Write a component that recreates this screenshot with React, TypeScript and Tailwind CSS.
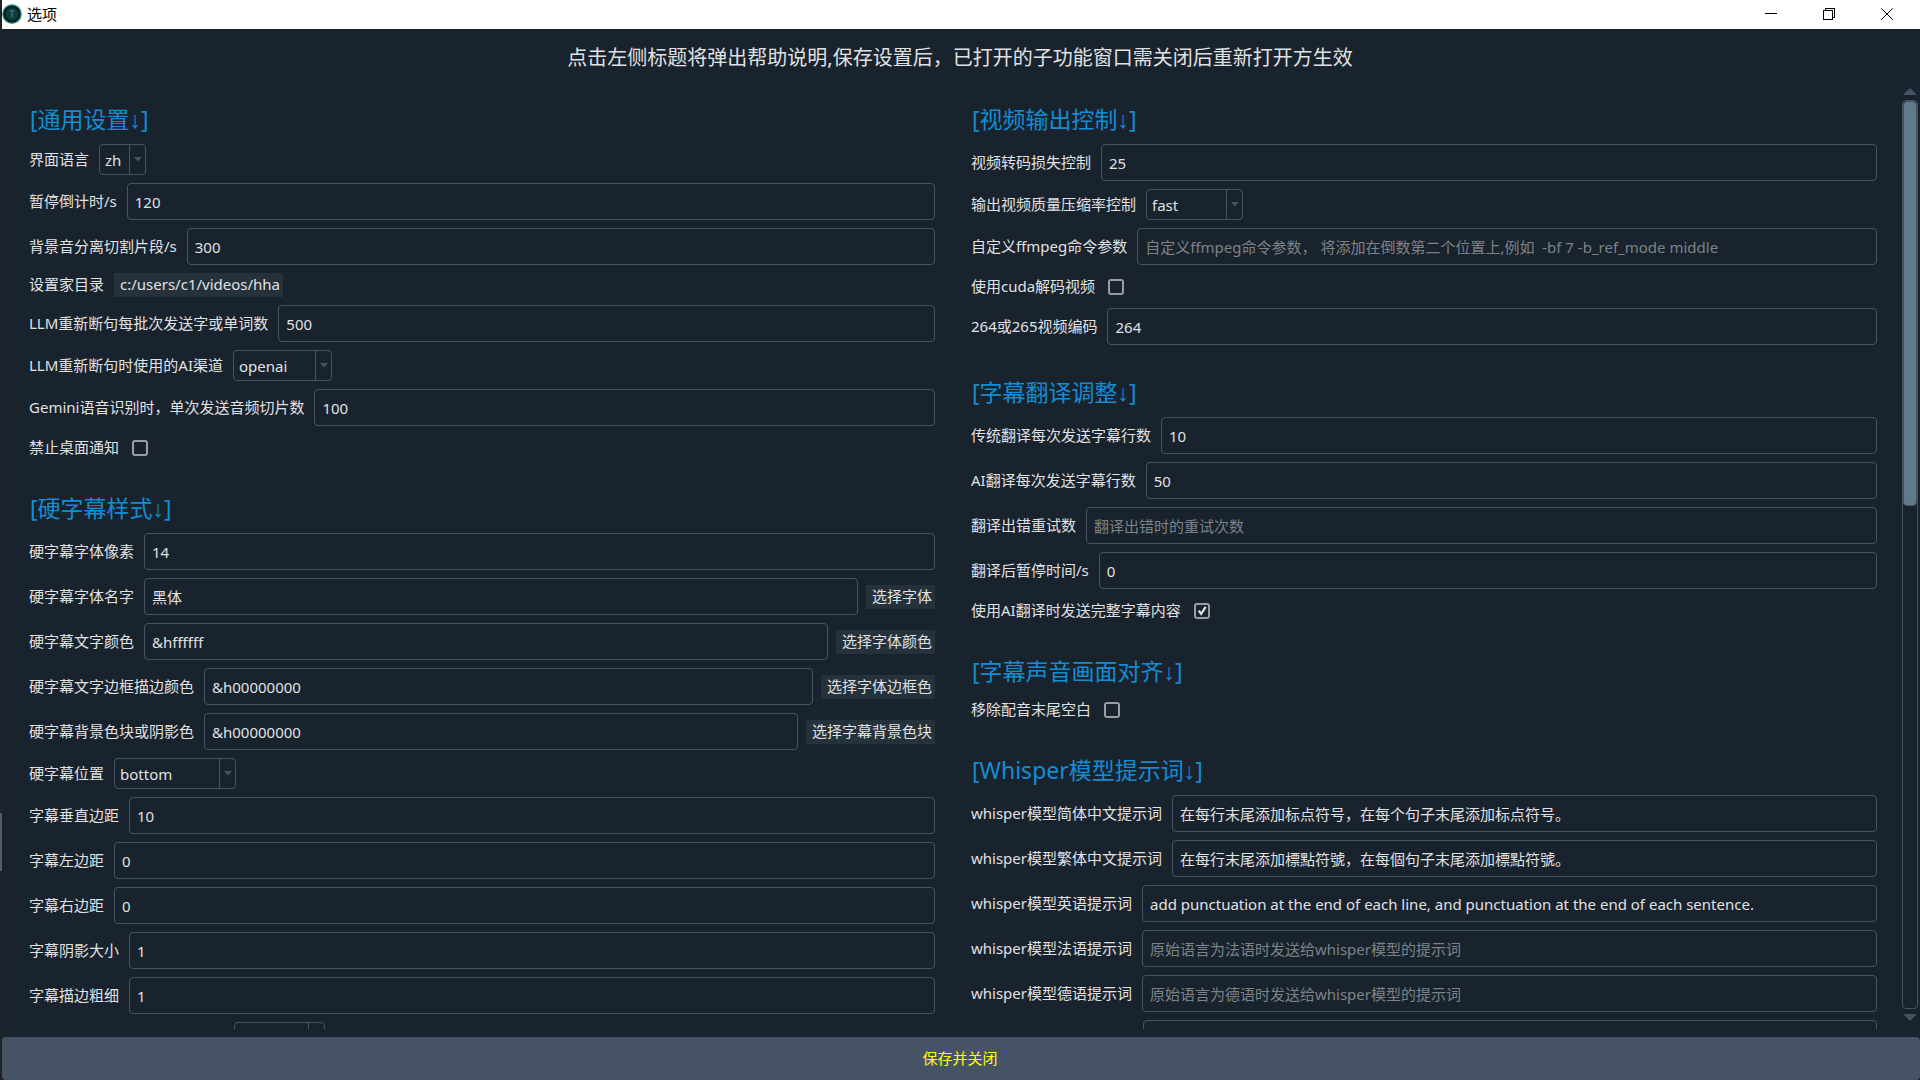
import React, { useId, useState } from 'react';

type Row =
  | { kind: 'input'; label: string; value?: string; placeholder?: string; action?: string }
  | { kind: 'select'; label: string; value: string; width: string }
  | { kind: 'check'; label: string; checked?: boolean }
  | { kind: 'path'; label: string; value: string };

interface Section {
  title: string;
  rows: Row[];
}

const LEFT: Section[] = [
  {
    title: '通用设置',
    rows: [
      { kind: 'select', label: '界面语言', value: 'zh', width: 'w-[47px]' },
      { kind: 'input', label: '暂停倒计时/s', value: '120' },
      { kind: 'input', label: '背景音分离切割片段/s', value: '300' },
      { kind: 'path', label: '设置家目录', value: 'c:/users/c1/videos/hha' },
      { kind: 'input', label: 'LLM重新断句每批次发送字或单词数', value: '500' },
      { kind: 'select', label: 'LLM重新断句时使用的AI渠道', value: 'openai', width: 'w-[99px]' },
      { kind: 'input', label: 'Gemini语音识别时，单次发送音频切片数', value: '100' },
      { kind: 'check', label: '禁止桌面通知' },
    ],
  },
  {
    title: '硬字幕样式',
    rows: [
      { kind: 'input', label: '硬字幕字体像素', value: '14' },
      { kind: 'input', label: '硬字幕字体名字', value: '黑体', action: '选择字体' },
      { kind: 'input', label: '硬字幕文字颜色', value: '&hffffff', action: '选择字体颜色' },
      { kind: 'input', label: '硬字幕文字边框描边颜色', value: '&h00000000', action: '选择字体边框色' },
      { kind: 'input', label: '硬字幕背景色块或阴影色', value: '&h00000000', action: '选择字幕背景色块' },
      { kind: 'select', label: '硬字幕位置', value: 'bottom', width: 'w-[122px]' },
      { kind: 'input', label: '字幕垂直边距', value: '10' },
      { kind: 'input', label: '字幕左边距', value: '0' },
      { kind: 'input', label: '字幕右边距', value: '0' },
      { kind: 'input', label: '字幕阴影大小', value: '1' },
      { kind: 'input', label: '字幕描边粗细', value: '1' },
    ],
  },
];

const RIGHT: Section[] = [
  {
    title: '视频输出控制',
    rows: [
      { kind: 'input', label: '视频转码损失控制', value: '25' },
      { kind: 'select', label: '输出视频质量压缩率控制', value: 'fast', width: 'w-[97px]' },
      {
        kind: 'input',
        label: '自定义ffmpeg命令参数',
        placeholder: '自定义ffmpeg命令参数， 将添加在倒数第二个位置上,例如  -bf 7 -b_ref_mode middle',
      },
      { kind: 'check', label: '使用cuda解码视频' },
      { kind: 'input', label: '264或265视频编码', value: '264' },
    ],
  },
  {
    title: '字幕翻译调整',
    rows: [
      { kind: 'input', label: '传统翻译每次发送字幕行数', value: '10' },
      { kind: 'input', label: 'AI翻译每次发送字幕行数', value: '50' },
      { kind: 'input', label: '翻译出错重试数', placeholder: '翻译出错时的重试次数' },
      { kind: 'input', label: '翻译后暂停时间/s', value: '0' },
      { kind: 'check', label: '使用AI翻译时发送完整字幕内容', checked: true },
    ],
  },
  {
    title: '字幕声音画面对齐',
    rows: [{ kind: 'check', label: '移除配音末尾空白' }],
  },
  {
    title: 'Whisper模型提示词',
    rows: [
      { kind: 'input', label: 'whisper模型简体中文提示词', value: '在每行末尾添加标点符号，在每个句子末尾添加标点符号。' },
      { kind: 'input', label: 'whisper模型繁体中文提示词', value: '在每行末尾添加標點符號，在每個句子末尾添加標點符號。' },
      {
        kind: 'input',
        label: 'whisper模型英语提示词',
        value: 'add punctuation at the end of each line, and punctuation at the end of each sentence.',
      },
      { kind: 'input', label: 'whisper模型法语提示词', placeholder: '原始语言为法语时发送给whisper模型的提示词' },
      { kind: 'input', label: 'whisper模型德语提示词', placeholder: '原始语言为德语时发送给whisper模型的提示词' },
    ],
  },
];

const FIELD = 'h-[37px] min-w-0 flex-1 rounded border border-[#455364] bg-transparent px-[7px] outline-none placeholder:text-[#7d8288] placeholder:opacity-100 focus:border-[#346792]';
const FLAT_BUTTON = 'flex h-6 shrink-0 items-center bg-[#26323b] pb-0.5 pl-1.5 pr-[3px] hover:bg-[#37414f]';

const Combo: React.FC<{ id?: string; value: string; width: string; name?: string }> = ({ id, value, width, name }) => (
  <div className={`relative h-[31px] shrink-0 ${width}`}>
    <select
      id={id}
      aria-label={name}
      defaultValue={value}
      className="block h-full w-full appearance-none rounded border border-[#455364] bg-[#19232d] pl-[5px] outline-none"
    >
      <option value={value}>{value}</option>
    </select>
    {/* drop-down part */}
    <span className="pointer-events-none absolute inset-y-0 right-0 flex w-[17px] items-center justify-center border-l border-[#455364]">
      <svg width="8" height="5" viewBox="0 0 8 5">
        <path d="M0 0h8L4 4.5z" fill="#455364" />
      </svg>
    </span>
  </div>
);

const CheckBox: React.FC<{ id: string; initial: boolean }> = ({ id, initial }) => {
  const [on, setOn] = useState(initial);
  return (
    <span className="relative ml-[3px] size-4">
      <input
        id={id}
        type="checkbox"
        checked={on}
        onChange={(e) => setOn(e.target.checked)}
        className="block size-4 appearance-none rounded-[3px] border-2 border-[#9a9ea3]"
      />
      {on && (
        <svg className="pointer-events-none absolute inset-0" width="16" height="16" viewBox="0 0 16 16">
          <path d="M4.6 7.6l2.5 3.2 4.6-7" fill="none" stroke="#e0e1e3" strokeWidth="2.2" />
        </svg>
      )}
    </span>
  );
};

const FormRow: React.FC<{ row: Row }> = ({ row }) => {
  const id = useId();
  return (
    <div className={`flex items-center ${row.kind === 'check' ? 'h-[27px]' : ''}`}>
      <label htmlFor={id} className="mr-2.5 shrink-0 cursor-pointer whitespace-nowrap pb-0.5">
        {row.label}
      </label>
      {row.kind === 'input' && (
        <>
          <input id={id} type="text" defaultValue={row.value} placeholder={row.placeholder} className={FIELD} />
          {row.action && <button type="button" className={`ml-2 ${FLAT_BUTTON}`}>{row.action}</button>}
        </>
      )}
      {row.kind === 'select' && <Combo id={id} value={row.value} width={row.width} />}
      {row.kind === 'check' && <CheckBox id={id} initial={!!row.checked} />}
      {row.kind === 'path' && <button id={id} type="button" className={FLAT_BUTTON}>{row.value}</button>}
    </div>
  );
};

const Column: React.FC<{ sections: Section[]; children?: React.ReactNode }> = ({ sections, children }) => (
  <div className="flex min-w-0 flex-1 flex-col gap-8">
    {sections.map((s) => (
      <section key={s.title} className="flex flex-col gap-2">
        <h2 className="pb-0.5 pl-px text-[23px] leading-[30px] text-[#148cd2]">[{s.title}↓]</h2>
        {s.rows.map((r) => (
          <FormRow key={r.label} row={r} />
        ))}
        {s === sections[sections.length - 1] && children}
      </section>
    ))}
  </div>
);

const TitleBar = () => (
  <header className="flex h-[29px] shrink-0 items-center bg-white pr-1 pb-px text-black">
    <svg width="20" height="20" viewBox="0 0 20 20">
      <circle cx="10" cy="10" r="9.2" fill="#06201f" stroke="#2a8a88" strokeWidth="1.2" />
      <circle cx="10" cy="10" r="6.2" fill="#123c3f" />
      <path d="M7.5 6.8h5M10 6.8v6.4" stroke="#2f8285" strokeWidth="1.2" fill="none" />
    </svg>
    <h1 className="ml-[5px] flex-1 text-[15px] leading-5">选项</h1>
    <button type="button" aria-label="最小化" className="flex h-full w-[58px] items-center justify-center hover:bg-gray-200">
      <svg width="12" height="12" viewBox="0 0 12 12" stroke="#000" shapeRendering="crispEdges">
        <path d="M0 5.5h12" />
      </svg>
    </button>
    <button type="button" aria-label="还原" className="flex h-full w-[58px] items-center justify-center hover:bg-gray-200">
      <svg width="12" height="12" viewBox="0 0 12 12" fill="none" stroke="#000" shapeRendering="crispEdges">
        <path d="M.5 2.5h9v9h-9zM2.5 2.5v-2h9v9h-2" />
      </svg>
    </button>
    <button type="button" aria-label="关闭" className="flex h-full w-[58px] items-center justify-center hover:bg-red-500">
      <svg width="12" height="12" viewBox="0 0 12 12" stroke="#000">
        <path d="M.3.3l11.4 11.4M11.7.3L.3 11.7" />
      </svg>
    </button>
  </header>
);

const ScrollBar = () => (
  <div className="flex w-4 shrink-0 flex-col items-center">
    <svg className="mt-2" width="14" height="7" viewBox="0 0 14 7">
      <path d="M7 0l7 7H0z" fill="#455364" />
    </svg>
    <div className="my-[5px] w-4 flex-1 rounded border border-[#455364]">
      <div className="h-[44.6%] rounded border border-[#455364] bg-[#60798b]" />
    </div>
    <svg className="mb-2" width="14" height="7" viewBox="0 0 14 7">
      <path d="M0 0h14L7 7z" fill="#455364" />
    </svg>
  </div>
);

export default function App() {
  return (
    <div className="flex h-screen bg-[#19232d] font-['Noto_Sans','Liberation_Sans','Noto_Sans_CJK_SC',sans-serif] text-[15px] leading-5 text-[#e0e1e3]">
      {/* sliver of the window behind */}
      <div className="flex w-0.5 shrink-0 flex-col bg-[#202225] pt-[813px]">
        <div className="h-[58px] bg-[#5a5b5d]" />
      </div>

      <div className="flex min-w-0 flex-1 flex-col">
        <TitleBar />
        <p className="pt-[15px] pr-0.5 pb-2 text-center text-xl leading-7">
          点击左侧标题将弹出帮助说明,保存设置后，已打开的子功能窗口需关闭后重新打开方生效
        </p>

        <main className="mb-2 flex min-h-0 flex-1 pr-0.5">
          <div className="flex min-w-0 flex-1 gap-9 overflow-hidden pt-6 pr-[25px] pl-[27px]">
            <Column sections={LEFT}>
              <div className="flex pl-[205px]">
                <Combo value="" width="w-[91px]" name="字幕样式" />
              </div>
            </Column>
            <Column sections={RIGHT}>
              <div className="flex pl-[172px]">
                <input type="text" aria-label="whisper" className={FIELD} />
              </div>
            </Column>
          </div>
          <ScrollBar />
        </main>

        <button type="button" className="h-[43px] shrink-0 rounded bg-[#455364] pr-0.5 pb-0.5 text-[#ffff00] hover:bg-[#54687a]">
          保存并关闭
        </button>
      </div>
    </div>
  );
}
